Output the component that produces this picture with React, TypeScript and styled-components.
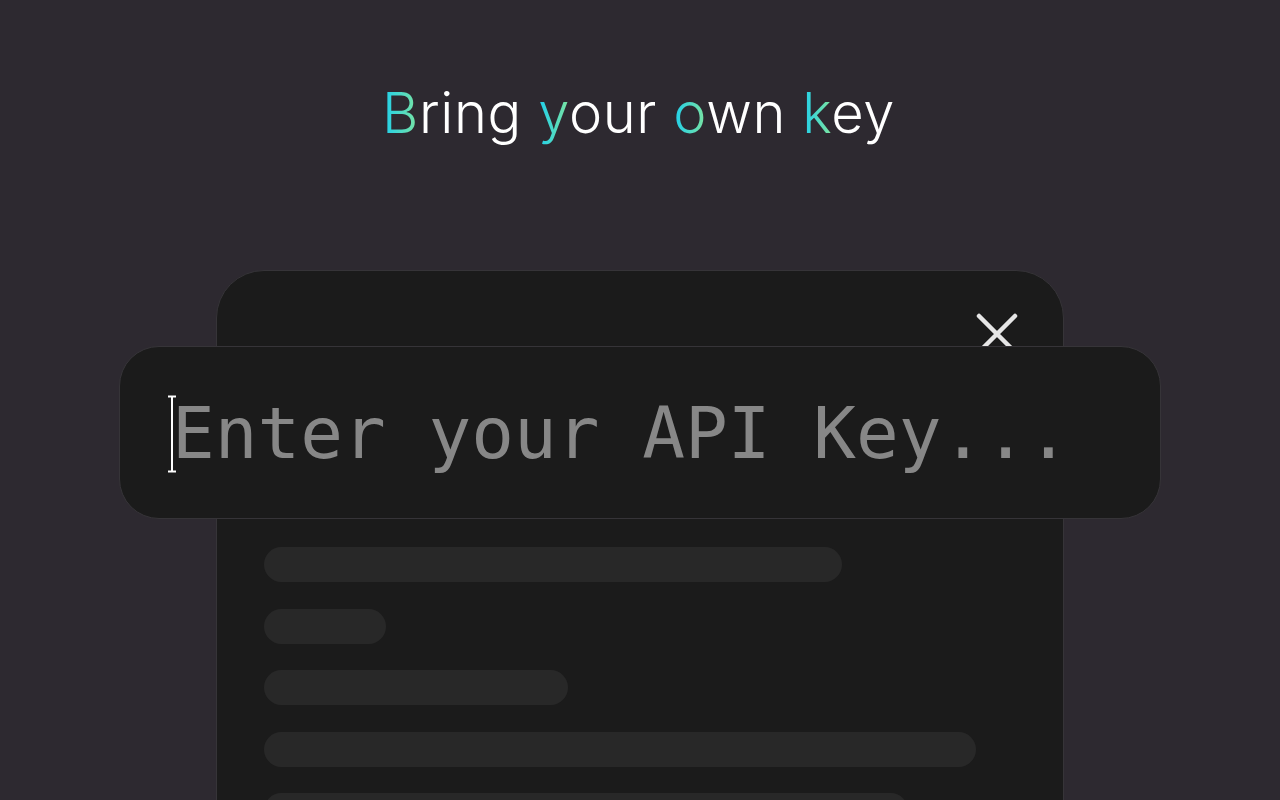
import React from "react";
import styled, { createGlobalStyle } from "styled-components";

const Global = createGlobalStyle`
  html, body {
    margin: 0;
    padding: 0;
    width: 100%;
    height: 100%;
    overflow: hidden;
    background: #2d2930;
  }
  #root { width: 100%; height: 100%; }
`;

const Page = styled.main`
  width: 1280px;
  height: 800px;
  display: flex;
  flex-direction: column;
  align-items: center;
  background: #2d2930;
  overflow: hidden;
`;

const Title = styled.h1`
  margin: 77px 0 0 -3px;
  font-family: "Inter", "Noto Sans", sans-serif;
  font-weight: 300;
  font-size: 56px;
  line-height: 72px;
  color: #ffffff;
  letter-spacing: 0.6px;
`;

const Accent = styled.span`
  background: linear-gradient(90deg, #1ccfee 0%, #7ce4a0 100%);
  -webkit-background-clip: text;
  background-clip: text;
  color: transparent;
`;

const Stage = styled.section`
  position: relative;
  margin-top: 121px;
  width: 848px;
`;

const Card = styled.div`
  box-sizing: border-box;
  width: 848px;
  height: 620px;
  background: #1b1b1b;
  border: 1px solid #363438;
  border-radius: 48px;
  padding: 42px 45px 0 47px;
  display: flex;
  flex-direction: column;
`;

const Header = styled.div`
  display: flex;
  justify-content: flex-end;
`;

const CloseButton = styled.button`
  width: 42px;
  height: 42px;
  padding: 0;
  border: none;
  background: transparent;
  display: flex;
  align-items: center;
  justify-content: center;
  cursor: pointer;
`;

const Skeletons = styled.div`
  margin-top: 192px;
  display: flex;
  flex-direction: column;
  gap: 26.6px;
`;

const Bar = styled.div<{ $w: number }>`
  width: ${(p) => p.$w}px;
  height: 35px;
  border-radius: 18px;
  background: #282828;
`;

const InputPanel = styled.div`
  position: absolute;
  top: 76px;
  left: -97px;
  right: -97px;
  height: 173px;
  box-sizing: border-box;
  background: #1b1b1b;
  border: 1px solid #363438;
  border-radius: 40px;
  display: flex;
  align-items: center;
  padding-left: 52px;
`;

const KeyInput = styled.input`
  flex: 1;
  min-width: 0;
  border: none;
  outline: none;
  background: transparent;
  font-family: "DejaVu Sans Mono", "Liberation Mono", monospace;
  font-size: 71px;
  color: #e5e5e5;
  padding: 0;
  margin-top: 1px;
  &::placeholder {
    color: #878787;
  }
`;

const IBeam = styled.svg`
  position: absolute;
  left: 47px;
  top: 48px;
`;

export default function App() {
  return (
    <>
      <Global />
      <Page>
        <Title>
          <Accent>B</Accent>ring <Accent>y</Accent>our <Accent>o</Accent>wn{" "}
          <Accent>k</Accent>ey
        </Title>
        <Stage>
          <Card>
            <Header>
              <CloseButton aria-label="Close">
                <svg width="42" height="42" viewBox="0 0 42 42">
                  <path
                    d="M3 3 L39 39 M39 3 L3 39"
                    stroke="#e6e6e6"
                    strokeWidth="4.5"
                    strokeLinecap="round"
                  />
                </svg>
              </CloseButton>
            </Header>
            <Skeletons>
              <Bar $w={578} />
              <Bar $w={122} />
              <Bar $w={304} />
              <Bar $w={712} />
              <Bar $w={644} />
            </Skeletons>
          </Card>
          <InputPanel>
            <KeyInput placeholder="Enter your API Key..." />
            <IBeam width="10" height="78" viewBox="0 0 10 78">
              <path d="M1 1.5 H9 M5 1.5 V76.5 M1 76.5 H9" stroke="#ffffff" strokeWidth="2" fill="none" />
            </IBeam>
          </InputPanel>
        </Stage>
      </Page>
    </>
  );
}
